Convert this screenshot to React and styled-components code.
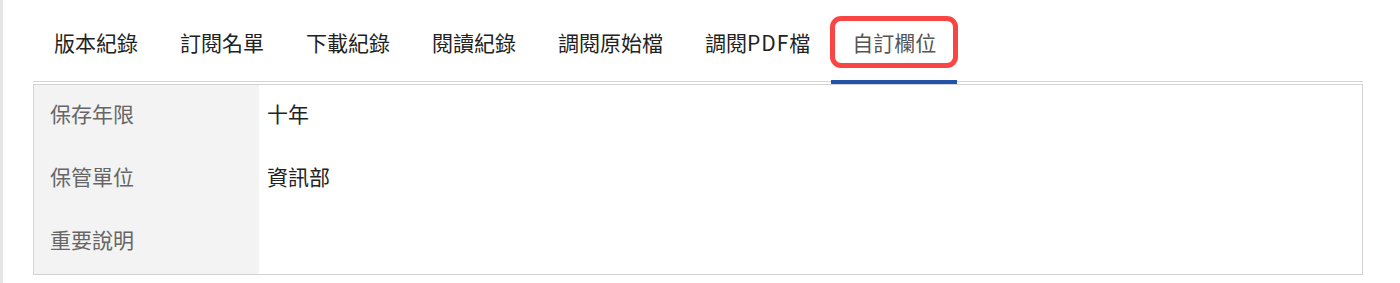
import React from 'react'
import styled, { createGlobalStyle } from 'styled-components'

const GlobalStyle = createGlobalStyle`
  html, body {
    margin: 0;
    padding: 0;
    background: #fff;
  }
  body {
    font-family: "Noto Sans CJK TC", "Noto Sans", "Liberation Sans", sans-serif;
  }
`

const Page = styled.div`
  display: flex;
  min-height: 283px;
`

const SideEdge = styled.div`
  width: 3px;
  flex: none;
  background: #e6e6e6;
`

const Main = styled.main`
  flex: 1;
  padding: 0 37px 0 30px;
`

const TabList = styled.ul`
  display: flex;
  margin: 0;
  padding: 0;
  list-style: none;
  height: 81px;
  border-bottom: 1px solid #d4d4d4;
`

const Tab = styled.li`
  position: relative;
  display: flex;
  align-items: center;
  padding: 4px 21px 0;
  font-size: 21px;
  line-height: 1;
  color: ${p => (p.$active ? '#555' : '#222')};
  cursor: pointer;

  ${p => p.$active && `
    &::after {
      content: '';
      position: absolute;
      left: 0;
      right: 0;
      bottom: -3px;
      height: 4px;
      background: #2352a7;
    }
  `}

  ${p => p.$marked && `
    &::before {
      content: '';
      position: absolute;
      top: 16px;
      left: -1px;
      right: -1px;
      height: 52px;
      box-sizing: border-box;
      border: 5px solid #fa4545;
      border-radius: 11px;
    }
  `}
`

const Latin = styled.span`
  letter-spacing: 1px;
`

const FieldTable = styled.div`
  margin-top: 2px;
  border: 1px solid #d4d4d4;
  display: grid;
  grid-template-columns: 225px 1fr;
  grid-auto-rows: 63px;
`

const Cell = styled.div`
  display: flex;
  align-items: center;
  padding-bottom: 7px;
  font-size: 21px;
  line-height: 1;
`

const Label = styled(Cell)`
  padding-left: 16px;
  background: #f3f3f3;
  color: #666;
`

const Value = styled(Cell)`
  padding-left: 8px;
  color: #222;
`

const tabs = ['版本紀錄', '訂閱名單', '下載紀錄', '閱讀紀錄', '調閱原始檔', '調閱PDF檔', '自訂欄位']

const fields = [
  { label: '保存年限', value: '十年' },
  { label: '保管單位', value: '資訊部' },
  { label: '重要說明', value: '' },
]

// wrap runs of latin letters so they get a touch of spacing
const renderTabText = text =>
  text.split(/([A-Za-z]+)/).map((part, i) =>
    /^[A-Za-z]+$/.test(part) ? <Latin key={i}>{part}</Latin> : part
  )

export default function App() {
  const active = '自訂欄位'
  return (
    <>
      <GlobalStyle />
      <Page>
        <SideEdge />
        <Main>
          <TabList role="tablist">
            {tabs.map(t => (
              <Tab key={t} role="tab" $active={t === active} $marked={t === active}>
                {renderTabText(t)}
              </Tab>
            ))}
          </TabList>
          <FieldTable>
            {fields.map(f => (
              <React.Fragment key={f.label}>
                <Label>{f.label}</Label>
                <Value>{f.value}</Value>
              </React.Fragment>
            ))}
          </FieldTable>
        </Main>
      </Page>
    </>
  )
}
